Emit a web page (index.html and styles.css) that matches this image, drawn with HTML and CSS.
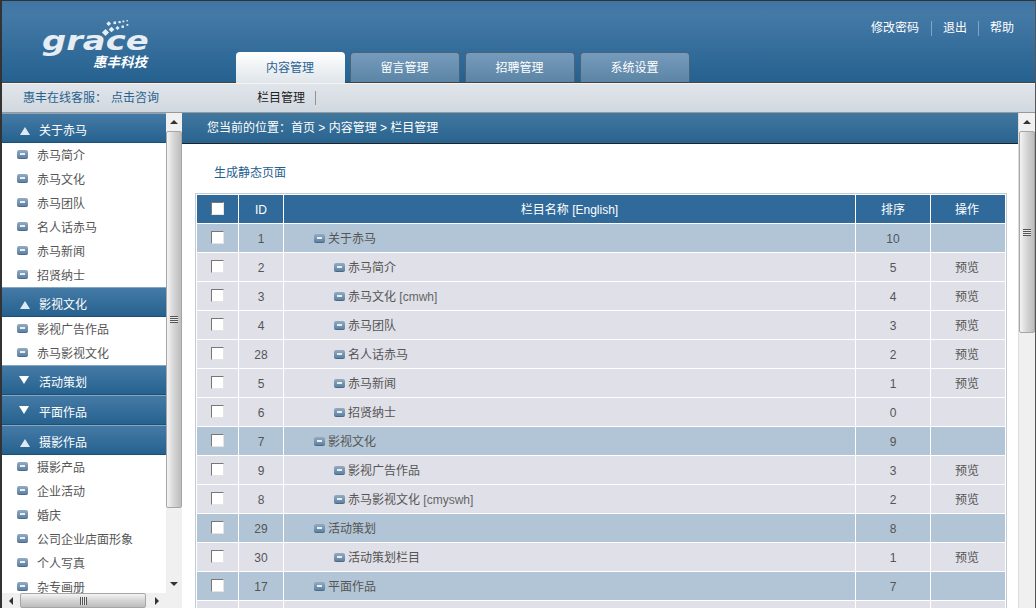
FILE: index.html
```html
<!DOCTYPE html>
<html lang="zh-CN">
<head>
  <meta charset="UTF-8">
  <meta name="viewport" content="width=device-width, initial-scale=1.0">
  <title>内容管理</title>
  <link rel="stylesheet" href="styles.css">
</head>
<body>
  <div class="page">
    <div class="header">
      <div class="logo">
        <svg class="logo-dots" width="40" height="24" viewBox="0 0 40 24">
          <g fill="#e8eef4">
            <rect x="8" y="14" width="5" height="5" transform="rotate(45 10.5 16.5)"/>
            <rect x="14.5" y="11.5" width="4" height="4" transform="rotate(45 16.5 13.5)"/>
            <rect x="21" y="10.5" width="3" height="3" transform="rotate(45 22.5 12)"/>
            <rect x="26.5" y="9.5" width="2.4" height="2.4"/>
            <rect x="31.5" y="8" width="1.8" height="1.8"/>
            <rect x="12" y="6" width="3.4" height="3.4" transform="rotate(45 13.7 7.7)"/>
            <rect x="18.5" y="5.5" width="2.6" height="2.6"/>
            <rect x="23.5" y="5" width="2.2" height="2.2"/>
            <rect x="27.5" y="4.5" width="1.8" height="1.8"/>
            <rect x="31.5" y="4" width="1.4" height="1.4"/>
          </g>
        </svg>
        <span class="logo-word">grace</span>
        <span class="logo-cn">惠丰科技</span>
      </div>
      <ul class="tabs">
        <li class="tab active">内容管理</li>
        <li class="tab">留言管理</li>
        <li class="tab">招聘管理</li>
        <li class="tab">系统设置</li>
      </ul>
      <div class="top-links">
        <a>修改密码</a>
        <a>退出</a>
        <a>帮助</a>
      </div>
    </div>

    <div class="subbar">
      <div class="service">惠丰在线客服：<a>点击咨询</a></div>
      <div class="subnav"><a>栏目管理</a></div>
    </div>

    <div class="content">
      <div class="side">
        <div class="side-top">
          <div class="menu">
            <div class="menu-head open">关于赤马</div>
            <div class="menu-item"><i class="minus"></i>赤马简介</div>
            <div class="menu-item"><i class="minus"></i>赤马文化</div>
            <div class="menu-item"><i class="minus"></i>赤马团队</div>
            <div class="menu-item"><i class="minus"></i>名人话赤马</div>
            <div class="menu-item"><i class="minus"></i>赤马新闻</div>
            <div class="menu-item"><i class="minus"></i>招贤纳士</div>
            <div class="menu-head open">影视文化</div>
            <div class="menu-item"><i class="minus"></i>影视广告作品</div>
            <div class="menu-item"><i class="minus"></i>赤马影视文化</div>
            <div class="menu-head closed">活动策划</div>
            <div class="menu-head closed">平面作品</div>
            <div class="menu-head open">摄影作品</div>
            <div class="menu-item"><i class="minus"></i>摄影产品</div>
            <div class="menu-item"><i class="minus"></i>企业活动</div>
            <div class="menu-item"><i class="minus"></i>婚庆</div>
            <div class="menu-item"><i class="minus"></i>公司企业店面形象</div>
            <div class="menu-item"><i class="minus"></i>个人写真</div>
            <div class="menu-item"><i class="minus"></i>杂专画册</div>
          </div>
          <div class="vscroll side-vscroll">
            <div class="sb-btn"><i class="arrow-up"></i></div>
            <div class="sb-thumb"><i class="grip"></i></div>
            <div class="sb-track"></div>
            <div class="sb-btn"><i class="arrow-down"></i></div>
          </div>
        </div>
        <div class="hscroll">
          <div class="sb-btn-h"><i class="arrow-left"></i></div>
          <div class="sb-thumb-h"><i class="grip-h"></i></div>
          <div class="sb-track"></div>
          <div class="sb-btn-h"><i class="arrow-right"></i></div>
          <div class="sb-corner"></div>
        </div>
      </div>

      <div class="main">
        <div class="main-inner">
          <div class="crumb">您当前的位置：首页 &gt; 内容管理 &gt; 栏目管理</div>
          <div class="actions"><a>生成静态页面</a></div>
          <table class="grid">
            <colgroup>
              <col class="col-check"><col class="col-id"><col><col class="col-sort"><col class="col-op">
            </colgroup>
            <thead>
              <tr>
                <th><input type="checkbox"></th>
                <th>ID</th>
                <th>栏目名称 [English]</th>
                <th>排序</th>
                <th>操作</th>
              </tr>
            </thead>
            <tbody>
              <tr class="lv1"><td><input type="checkbox"></td><td>1</td><td class="name"><i class="minus"></i>关于赤马</td><td>10</td><td></td></tr>
              <tr class="lv2"><td><input type="checkbox"></td><td>2</td><td class="name"><i class="minus"></i>赤马简介</td><td>5</td><td>预览</td></tr>
              <tr class="lv2"><td><input type="checkbox"></td><td>3</td><td class="name"><i class="minus"></i>赤马文化 <span class="en">[cmwh]</span></td><td>4</td><td>预览</td></tr>
              <tr class="lv2"><td><input type="checkbox"></td><td>4</td><td class="name"><i class="minus"></i>赤马团队</td><td>3</td><td>预览</td></tr>
              <tr class="lv2"><td><input type="checkbox"></td><td>28</td><td class="name"><i class="minus"></i>名人话赤马</td><td>2</td><td>预览</td></tr>
              <tr class="lv2"><td><input type="checkbox"></td><td>5</td><td class="name"><i class="minus"></i>赤马新闻</td><td>1</td><td>预览</td></tr>
              <tr class="lv2"><td><input type="checkbox"></td><td>6</td><td class="name"><i class="minus"></i>招贤纳士</td><td>0</td><td></td></tr>
              <tr class="lv1"><td><input type="checkbox"></td><td>7</td><td class="name"><i class="minus"></i>影视文化</td><td>9</td><td></td></tr>
              <tr class="lv2"><td><input type="checkbox"></td><td>9</td><td class="name"><i class="minus"></i>影视广告作品</td><td>3</td><td>预览</td></tr>
              <tr class="lv2"><td><input type="checkbox"></td><td>8</td><td class="name"><i class="minus"></i>赤马影视文化 <span class="en">[cmyswh]</span></td><td>2</td><td>预览</td></tr>
              <tr class="lv1"><td><input type="checkbox"></td><td>29</td><td class="name"><i class="minus"></i>活动策划</td><td>8</td><td></td></tr>
              <tr class="lv2"><td><input type="checkbox"></td><td>30</td><td class="name"><i class="minus"></i>活动策划栏目</td><td>1</td><td>预览</td></tr>
              <tr class="lv1"><td><input type="checkbox"></td><td>17</td><td class="name"><i class="minus"></i>平面作品</td><td>7</td><td></td></tr>
              <tr class="lv2"><td></td><td></td><td></td><td></td><td></td></tr>
            </tbody>
          </table>
        </div>
        <div class="vscroll main-vscroll">
          <div class="sb-btn"><i class="arrow-up"></i></div>
          <div class="sb-thumb"><i class="grip"></i></div>
          <div class="sb-track"></div>
        </div>
      </div>
    </div>
  </div>
</body>
</html>
```

FILE: styles.css
```css
* {
  box-sizing: border-box;
}

html, body {
  margin: 0;
  padding: 0;
  height: 100%;
  overflow: hidden;
}

body {
  font-family: "Liberation Sans", "Noto Sans CJK SC", sans-serif;
  font-size: 12px;
  color: #555;
  background: #fff;
}

.page {
  display: flex;
  flex-direction: column;
  height: 100vh;
  border-top: 1px solid #333;
  border-left: 2px solid #333;
  border-right: 1px solid #555;
  overflow: hidden;
}

/* Header */
.header {
  display: flex;
  flex: none;
  height: 82px;
  border-bottom: 1px solid #444;
  background: linear-gradient(#3f75a3, #457aa7 15%, #25618f);
}

.logo {
  position: relative;
  flex: none;
  width: 234px;
}

.logo-dots {
  position: absolute;
  left: 93px;
  top: 15px;
}

.logo-word {
  position: absolute;
  left: 40px;
  top: 20px;
  font-family: "DejaVu Sans", sans-serif;
  font-size: 26px;
  font-weight: bold;
  font-style: italic;
  line-height: 40px;
  color: #e6edf3;
  transform: scaleX(1.3);
  transform-origin: left center;
}

.logo-cn {
  position: absolute;
  left: 91px;
  top: 53px;
  font-size: 13.5px;
  font-weight: bold;
  font-style: italic;
  line-height: 18px;
  color: #fff;
}

.tabs {
  display: flex;
  align-self: flex-end;
  gap: 5px;
  margin: 0;
  padding: 0;
  list-style: none;
}

.tab {
  width: 110px;
  height: 30px;
  padding-right: 1px;
  border: 1px solid #4a6378;
  border-bottom: none;
  border-radius: 4px 4px 0 0;
  background: linear-gradient(#769cbd, #5b84a5);
  color: #fff;
  line-height: 30px;
  text-align: center;
}

.tab.active {
  position: relative;
  width: 109px;
  height: 31px;
  margin-bottom: -1px;
  border: none;
  background: linear-gradient(#fff, #dfe5ea);
  color: #2a6394;
  line-height: 32px;
}

.top-links {
  display: flex;
  align-self: flex-start;
  margin: 20px 21px 0 auto;
  line-height: 15px;
}

.top-links a {
  padding: 0 11px;
  border-left: 1px solid rgba(255, 255, 255, 0.35);
  color: #fff;
}

.top-links a:first-child {
  padding-right: 12px;
  border-left: none;
}

.top-links a:last-child {
  padding-right: 0;
}

/* Sub bar */
.subbar {
  display: flex;
  flex: none;
  align-items: center;
  height: 30px;
  padding-bottom: 4px;
  border-top: 1px solid #f2f4f6;
  border-bottom: 1px solid #999;
  background: linear-gradient(#e0e5ea, #d2d8df);
}

.service {
  flex: none;
  width: 255px;
  padding-left: 21px;
  color: #27628f;
}

.service a {
  margin-left: 4px;
}

.subnav a {
  padding-right: 10px;
  border-right: 1px solid #8b949c;
  color: #222;
}

/* Layout below the bars */
.content {
  display: flex;
  flex: 1;
  min-height: 0;
}

.side {
  display: flex;
  flex: none;
  flex-direction: column;
  width: 180px;
}

.side-top {
  display: flex;
  flex: 1;
  min-height: 0;
}

.menu {
  flex: none;
  width: 164px;
  overflow: hidden;
  background: #fff;
}

.menu-head {
  position: relative;
  display: flex;
  align-items: center;
  height: 30px;
  padding: 2px 0 0 37px;
  border-top: 1px solid #86a6c0;
  border-bottom: 1px solid #1d4f75;
  background: linear-gradient(#457aa6, #26628f);
  color: #fff;
}

.menu-head::before {
  content: "";
  position: absolute;
  left: 18px;
  border-left: 5px solid transparent;
  border-right: 5px solid transparent;
}

.menu-head.open::before {
  top: 13px;
  border-bottom: 8px solid #dfe9f1;
}

.menu-head.closed::before {
  top: 10px;
  left: 17px;
  border-top: 8px solid #fff;
}

.menu-item {
  display: flex;
  align-items: center;
  height: 24px;
  padding: 0 0 2px 15px;
  color: #555;
  white-space: nowrap;
}

.minus {
  position: relative;
  display: inline-block;
  flex: none;
  width: 11px;
  height: 9px;
  margin-right: 9px;
  border-radius: 2px;
  border-bottom: 1px solid #486a88;
  background: linear-gradient(#93abc1, #5f83a3);
}

.minus::after {
  content: "";
  position: absolute;
  left: 3px;
  top: 3px;
  width: 5px;
  height: 2px;
  background: #e8eef4;
}

/* Fake scrollbars */
.vscroll {
  display: flex;
  flex: none;
  flex-direction: column;
  background: #f0f0f0;
}

.side-vscroll {
  width: 16px;
}

.main-vscroll {
  width: 17px;
  border-left: 1px solid #ddd;
}

.sb-btn {
  display: flex;
  flex: none;
  align-items: center;
  justify-content: center;
  height: 18px;
}

.sb-thumb {
  display: flex;
  flex: none;
  align-items: center;
  justify-content: center;
  border: 1px solid #a6a6a6;
  border-radius: 2px;
  background: linear-gradient(90deg, #f4f4f4, #d4d4d4 50%, #bdbdbd);
}

.side-vscroll .sb-thumb {
  height: 377px;
}

.main-vscroll .sb-thumb {
  height: 202px;
}

.sb-track {
  flex: 1;
}

.grip {
  width: 8px;
  height: 7px;
  background: repeating-linear-gradient(#555 0 1px, #e8e8e8 1px 2px);
}

.grip-h {
  width: 7px;
  height: 8px;
  background: repeating-linear-gradient(90deg, #555 0 1px, #e8e8e8 1px 2px);
}

.arrow-up,
.arrow-down,
.arrow-left,
.arrow-right {
  width: 0;
  height: 0;
  border: 4px solid transparent;
}

.arrow-up {
  border-top: none;
  border-bottom: 4px solid #333;
}

.arrow-down {
  border-bottom: none;
  border-top: 4px solid #333;
}

.arrow-left {
  border-left: none;
  border-right: 4px solid #333;
}

.arrow-right {
  border-right: none;
  border-left: 4px solid #333;
}

.hscroll {
  display: flex;
  flex: none;
  height: 15px;
  background: #f0f0f0;
}

.sb-btn-h {
  display: flex;
  flex: none;
  align-items: center;
  justify-content: center;
  width: 18px;
  height: 15px;
}

.sb-thumb-h {
  display: flex;
  flex: none;
  align-items: center;
  justify-content: center;
  width: 126px;
  border: 1px solid #a6a6a6;
  border-radius: 2px;
  background: linear-gradient(#f4f4f4, #d4d4d4 50%, #bdbdbd);
}

.sb-corner {
  flex: none;
  width: 16px;
}

/* Main frame */
.main {
  display: flex;
  flex: 1;
  min-width: 0;
}

.main-inner {
  flex: 1;
  min-width: 0;
  overflow: hidden;
}

.crumb {
  height: 31px;
  padding-left: 25px;
  border-bottom: 1px solid #222;
  background: linear-gradient(#41789f, #28638f);
  color: #fff;
  line-height: 31px;
}

.actions {
  height: 49px;
  padding: 21px 0 0 32px;
  line-height: 17px;
  color: #1f6090;
}

.grid {
  width: 812px;
  margin-left: 13px;
  border: 1px solid #c2ccd2;
  border-spacing: 1px;
  border-collapse: separate;
  table-layout: fixed;
}

.col-check {
  width: 41px;
}

.col-id {
  width: 44px;
}

.col-sort,
.col-op {
  width: 74px;
}

.grid th,
.grid td {
  height: 28px;
  padding: 0;
  text-align: center;
  font-weight: normal;
}

/* digits sit a pixel low and hanzi a pixel high against the fallback line box */
.grid th:nth-child(2),
.grid td:nth-child(2),
.grid td:nth-child(4) {
  padding-top: 2px;
}

.grid th:nth-child(3),
.grid th:nth-child(4),
.grid th:nth-child(5),
.grid td:nth-child(3),
.grid td:nth-child(5) {
  padding-bottom: 2px;
}

.grid th:nth-child(5),
.grid td:nth-child(5) {
  padding-right: 2px;
}

.grid th {
  background: #2f6a9a;
  color: #fff;
}

.lv1 td {
  background: #b2c5d6;
}

.lv2 td {
  background: #e0e0e8;
}

.grid td {
  color: #555;
}

.grid td.name {
  text-align: left;
  white-space: nowrap;
}

.lv1 .name {
  padding-left: 30px;
}

.lv2 .name {
  padding-left: 50px;
}

.name .minus {
  margin-right: 3px;
  vertical-align: 0;
}

.en {
  color: #666;
}

.grid input {
  display: block;
  width: 13px;
  height: 13px;
  margin: -1px auto 0;
  appearance: none;
  background: #fff;
  border: 1px solid;
  border-color: #777 #e4e4e4 #e4e4e4 #777;
}
```
